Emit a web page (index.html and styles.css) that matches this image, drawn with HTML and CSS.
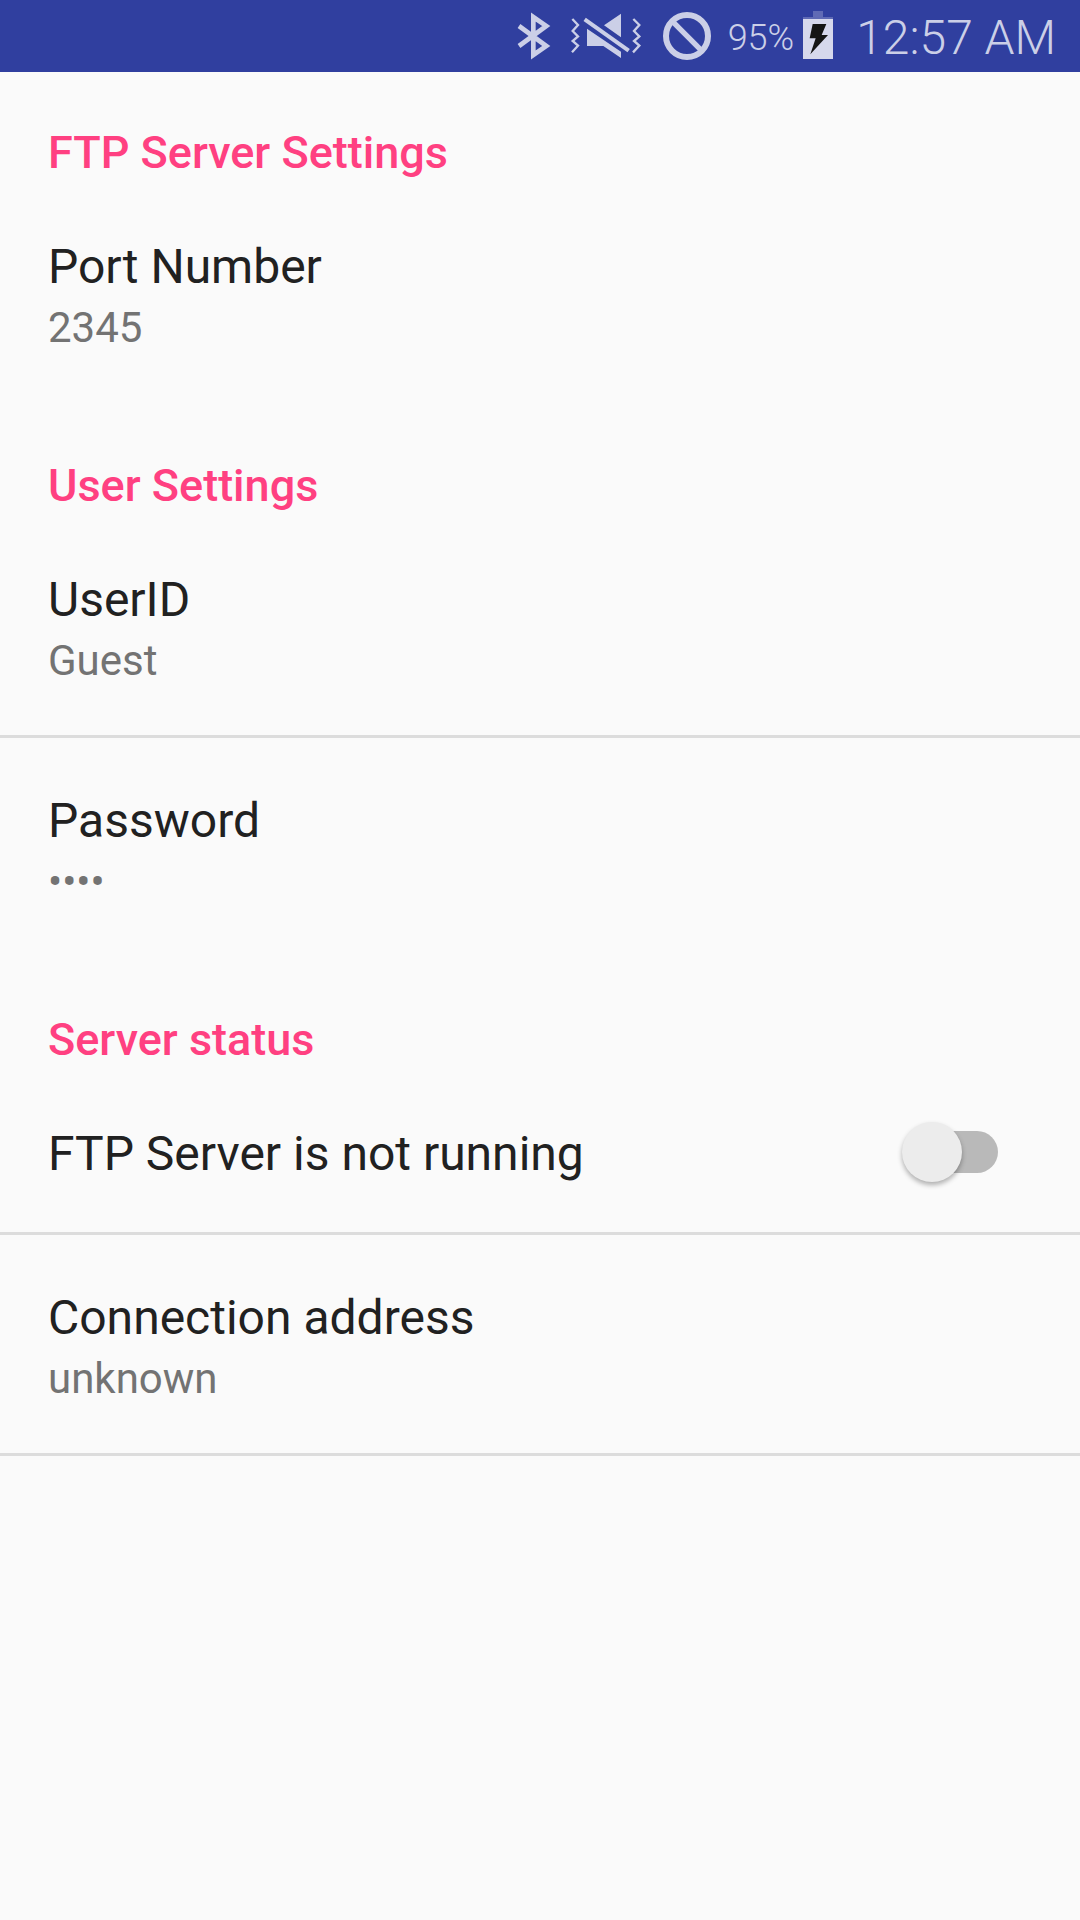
FILE: index.html
```html
<!DOCTYPE html>
<html lang="en">
<head>
<meta charset="utf-8">
<meta name="viewport" content="width=device-width, initial-scale=1">
<title>FTP Server Settings</title>
<link rel="stylesheet" href="styles.css">
</head>
<body>
<header class="status-bar">
  <svg class="icon-bluetooth" viewBox="48 0 111 216" role="img" aria-label="Bluetooth">
    <path d="M54 78L136 138L97 165V51L136 78L54 138" fill="none" stroke="currentColor" stroke-width="14"/>
  </svg>
  <svg class="icon-mute" viewBox="207 0 228 216" role="img" aria-label="Vibrate">
    <path d="M360 41V112L309 76ZM258 86L360 155V174L307 138H258Z" fill="currentColor"/>
    <path d="M251 58L383 152" fill="none" stroke="currentColor" stroke-width="12"/>
    <path d="M214 57L231 75L215 93L231 109L215 123L231 137L213 157M397 57L415 75L399 93L415 109L399 123L415 137L396 157" fill="none" stroke="currentColor" stroke-width="7"/>
  </svg>
  <svg class="icon-blocked" viewBox="483 0 150 216" role="img" aria-label="Blocked">
    <circle cx="558" cy="108" r="63" fill="none" stroke="currentColor" stroke-width="18"/>
    <path d="M515 65L601 151" stroke="currentColor" stroke-width="16"/>
  </svg>
  <div class="battery">
    <span class="battery-level">95%</span>
    <svg class="icon-battery" viewBox="309 0 96 216" role="img" aria-label="Charging">
      <path d="M342 33H372V51H402V57H312V51H342Z" fill="#5f6ab5"/>
      <path d="M312 57H402V177H312Z" fill="#d6d8ec"/>
      <path d="M341 72H382L368 105H387L334 163L350 115H332Z" fill="#151515"/>
    </svg>
  </div>
  <time class="clock">12:57 AM</time>
</header>
<main>
  <section>
    <h2 class="category">FTP Server Settings</h2>
    <button class="preference" type="button">
      <span class="title">Port Number</span>
      <span class="summary">2345</span>
    </button>
  </section>
  <section>
    <h2 class="category">User Settings</h2>
    <button class="preference divided" type="button">
      <span class="title">UserID</span>
      <span class="summary">Guest</span>
    </button>
    <button class="preference" type="button">
      <span class="title">Password</span>
      <span class="summary">••••</span>
    </button>
  </section>
  <section>
    <h2 class="category">Server status</h2>
    <div class="preference divided switch-row">
      <label class="title" for="server-switch">FTP Server is not running</label>
      <input class="switch" id="server-switch" type="checkbox" role="switch">
    </div>
    <button class="preference divided" type="button">
      <span class="title">Connection address</span>
      <span class="summary">unknown</span>
    </button>
  </section>
</main>
</body>
</html>
```
FILE: styles.css
```css
* {
  box-sizing: border-box;
}

body {
  margin: 0;
  min-height: 100vh;
  background: #fafafa;
  color: #212121;
  font-family: Roboto, "Noto Sans", sans-serif;
}

.status-bar {
  display: flex;
  justify-content: flex-end;
  align-items: center;
  gap: 16px;
  height: 72px;
  padding-right: 24px;
  background: #303f9f;
  color: #cbcfe7;
  font-weight: 350;
}

.status-bar svg {
  flex: none;
  height: 72px;
}

.icon-bluetooth {
  width: 37px;
}

.icon-mute {
  width: 76px;
}

.icon-blocked {
  width: 50px;
}

.icon-battery {
  width: 32px;
}

.battery {
  display: flex;
  align-items: center;
  gap: 8px;
}

.battery-level,
.clock {
  padding-top: 4px;
  line-height: 68px;
}

.battery-level {
  font-size: 36px;
}

.clock {
  margin-left: 6px;
  font-size: 48px;
}

.category {
  margin: 0;
  padding: 53px 48px 3px;
  color: #ff4081;
  font-size: 45px;
  font-weight: 500;
  line-height: 56px;
}

.preference {
  display: flex;
  flex-direction: column;
  width: 100%;
  padding: 51px 48px 46px;
  border: 0;
  border-bottom: 3px solid transparent;
  background: none;
  color: inherit;
  font: inherit;
  text-align: left;
}

.divided {
  border-bottom-color: #dcdcdc;
}

.switch-row {
  flex-direction: row;
  align-items: flex-start;
  justify-content: space-between;
  padding-right: 82px;
}

.title {
  font-size: 48px;
  line-height: 64px;
}

.summary {
  color: #737373;
  font-size: 42px;
  line-height: 57px;
}

.switch {
  appearance: none;
  display: grid;
  align-items: center;
  flex: none;
  width: 96px;
  height: 60px;
  margin: 0;
}

.switch::before,
.switch::after {
  grid-area: 1 / 1;
  content: "";
}

.switch::before {
  height: 42px;
  margin-left: 12px;
  border-radius: 21px;
  background: #b9b9b9;
}

.switch::after {
  width: 60px;
  height: 60px;
  border-radius: 50%;
  background: #ececec;
  box-shadow: 0 3px 5px rgba(0, 0, 0, 0.3);
}

.switch:checked::before {
  background: #ff9fc0;
}

.switch:checked::after {
  justify-self: end;
  background: #ff4081;
}
```
